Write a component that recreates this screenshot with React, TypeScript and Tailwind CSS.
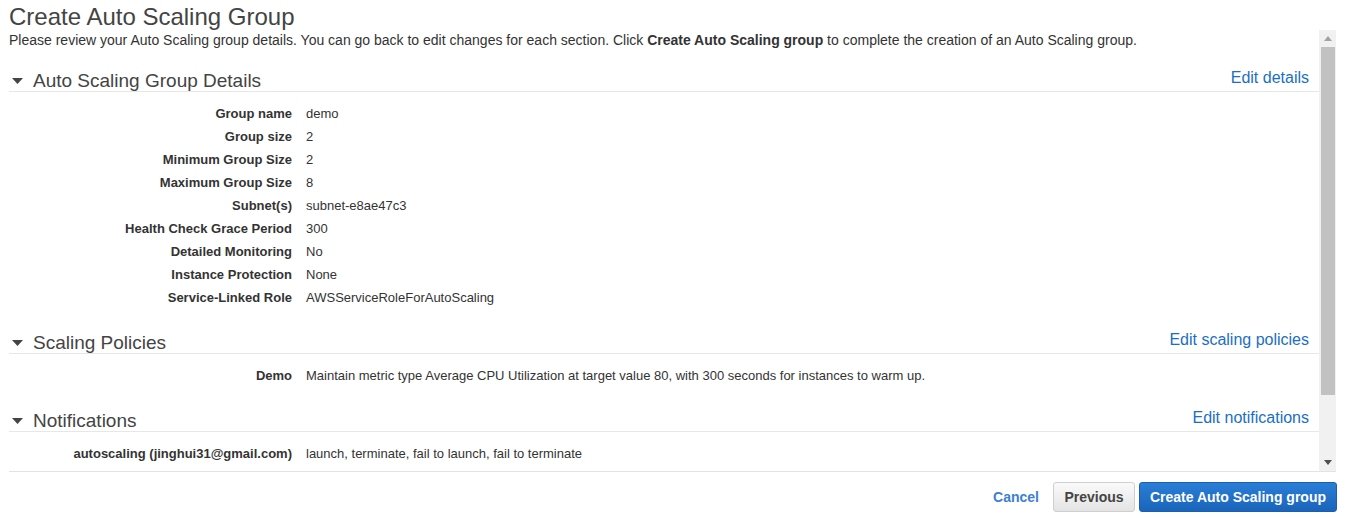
import React from "react";

const Tri = () => (
  <svg width="11" height="6" viewBox="0 0 11 6" className="mr-[10px] ml-[3px] mb-[1px]">
    <path d="M0 0 H11 L5.5 6 Z" fill="#444" />
  </svg>
);

function Section({
  title,
  link,
  rows,
}: {
  title: string;
  link: string;
  rows: [string, string][];
}) {
  return (
    <div className="mb-[24px]">
      <div className="flex items-end justify-between border-b border-[#e7e7e7] h-[21px]">
        <div className="flex items-center text-[19px] leading-[20px] text-[#444]">
          <Tri />
          <span>{title}</span>
        </div>
        <a className="text-[16px] leading-[20px] text-[#1a6fc4] mr-[10px] mb-[3px] cursor-pointer">
          {link}
        </a>
      </div>
      <div className="pt-[10px]">
        {rows.map(([k, v]) => (
          <div key={k} className="flex h-[23px] items-center text-[13px]">
            <div className="w-[283px] text-right font-bold text-[#333] shrink-0">{k}</div>
            <div className="pl-[14px] text-[#333]">{v}</div>
          </div>
        ))}
      </div>
    </div>
  );
}

export default function App() {
  return (
    <div
      className="w-[1345px] h-[518px] bg-white px-[9px] overflow-hidden"
      style={{ fontFamily: '"Liberation Sans", Arial, sans-serif' }}
    >
      <h1 className="text-[24px] leading-[30px] text-[#444] pt-[2px] h-[30px]">Create Auto Scaling Group</h1>
      <div className="flex h-[442px] border-b border-[#e3e3e3]">
        <div className="flex-1 overflow-hidden">
          <p className="text-[14px] leading-[20px] text-[#333]">
            Please review your Auto Scaling group details. You can go back to edit changes for each section. Click{" "}
            <b>Create Auto Scaling group</b> to complete the creation of an Auto Scaling group.
          </p>
          <div className="h-[21px]" />
          <Section
            title="Auto Scaling Group Details"
            link="Edit details"
            rows={[
              ["Group name", "demo"],
              ["Group size", "2"],
              ["Minimum Group Size", "2"],
              ["Maximum Group Size", "8"],
              ["Subnet(s)", "subnet-e8ae47c3"],
              ["Health Check Grace Period", "300"],
              ["Detailed Monitoring", "No"],
              ["Instance Protection", "None"],
              ["Service-Linked Role", "AWSServiceRoleForAutoScaling"],
            ]}
          />
          <Section
            title="Scaling Policies"
            link="Edit scaling policies"
            rows={[
              [
                "Demo",
                "Maintain metric type Average CPU Utilization at target value 80, with 300 seconds for instances to warm up.",
              ],
            ]}
          />
          <Section
            title="Notifications"
            link="Edit notifications"
            rows={[["autoscaling (jinghui31@gmail.com)", "launch, terminate, fail to launch, fail to terminate"]]}
          />
        </div>
        <div className="w-[17px] bg-[#f1f1f1] flex flex-col items-center">
          <div className="h-[17px] w-full flex items-center justify-center">
            <svg width="8" height="5" viewBox="0 0 8 5">
              <path d="M0 5 L4 0 L8 5 Z" fill="#a3a3a3" />
            </svg>
          </div>
          <div className="w-[14px] h-[348px] bg-[#c1c1c1]" />
          <div className="flex-1" />
          <div className="h-[17px] w-full flex items-center justify-center">
            <svg width="8" height="5" viewBox="0 0 8 5">
              <path d="M0 0 L8 0 L4 5 Z" fill="#505050" />
            </svg>
          </div>
        </div>
      </div>
      <div className="flex justify-end items-center h-[50px] -mr-[1px]">
        <a className="text-[14px] font-bold text-[#3a80d4] mr-[14px] cursor-pointer">Cancel</a>
        <button className="h-[30px] w-[82px] rounded-[3px] border border-[#cfcfcf] bg-gradient-to-b from-[#fafafa] to-[#e4e4e4] text-[14px] font-bold text-[#444] mr-[4px]">
          Previous
        </button>
        <button className="h-[30px] w-[198px] rounded-[3px] border border-[#1b5fae] bg-gradient-to-b from-[#2a7ed6] to-[#1a64bb] text-[14px] font-bold text-white">
          Create Auto Scaling group
        </button>
      </div>
    </div>
  );
}
